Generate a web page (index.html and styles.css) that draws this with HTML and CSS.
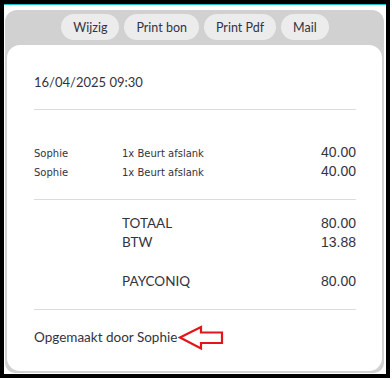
FILE: index.html
```html
<!DOCTYPE html>
<html>
<head>
<meta charset="utf-8">
<link rel="stylesheet" href="styles.css">
</head>
<body>
<div class="frame">
  <div class="panel">
    <div class="toolbar">
      <button class="pill">Wijzig</button>
      <button class="pill">Print bon</button>
      <button class="pill">Print Pdf</button>
      <button class="pill">Mail</button>
    </div>
    <div class="card">
      <div class="date">16/04/2025 09:30</div>
      <div class="rule rule-1"></div>
      <div class="lines">
        <div class="line"><span class="who">Sophie</span><span class="what">1x Beurt afslank</span><span class="amt">40.00</span></div>
        <div class="line"><span class="who">Sophie</span><span class="what">1x Beurt afslank</span><span class="amt">40.00</span></div>
      </div>
      <div class="rule rule-2"></div>
      <div class="totals">
        <div class="tot"><span class="lbl">TOTAAL</span><span class="amt">80.00</span></div>
        <div class="tot"><span class="lbl">BTW</span><span class="amt">13.88</span></div>
        <div class="tot pay"><span class="lbl">PAYCONIQ</span><span class="amt">80.00</span></div>
      </div>
      <div class="rule rule-3"></div>
      <div class="footer">
        <span class="made">Opgemaakt door Sophie</span>
        <svg class="arrow" width="46" height="26" viewBox="0 0 46 26">
          <polygon points="2,12.5 23,2 23,7.5 44,7.5 44,18 23,18 23,23.5" fill="none" stroke="#e3141b" stroke-width="2.2" stroke-linejoin="miter"/>
        </svg>
      </div>
    </div>
  </div>
</div>
</body>
</html>
```
FILE: styles.css
```css
html, body {
  margin: 0;
  padding: 0;
  background: #ffffff;
}
body {
  width: 392px;
  height: 380px;
  font-family: Lato, "Noto Sans", sans-serif;
  color: #333340;
}
.frame {
  box-sizing: border-box;
  width: 390px;
  height: 378px;
  border: 4px solid #000;
  background: #fff;
  display: flex;
  flex-direction: column;
  box-shadow: inset 0 1px 0 #17c3cc;
  padding: 6px 2px 0 1px;
}
.panel {
  flex: 1;
  background: #d1d1d1;
  border-radius: 12px 12px 10px 10px;
  padding: 4px 2px 2px 2px;
  display: flex;
  flex-direction: column;
  margin-bottom: 1px;
}
.toolbar {
  display: flex;
  justify-content: center;
  gap: 5px;
  height: 26px;
  margin-left: 1px;
}
.pill {
  font-family: Lato, "Noto Sans", sans-serif;
  font-size: 12.5px;
  color: #333340;
  background: #ececec;
  border: none;
  border-radius: 13px;
  height: 26px;
  padding: 0 12px;
  margin: 0;
}
.card {
  flex: 1;
  margin-top: 5px;
  background: #fff;
  border-radius: 13px;
  padding: 0 26px 0 27px;
  display: flex;
  flex-direction: column;
}
.date {
  margin-top: 27px;
  height: 20px;
  line-height: 20px;
  font-size: 13px;
}
.rule {
  height: 0;
  border-top: 1px solid #dcdcdc;
}
.rule-1 { margin-top: 17px; }
.rule-2 { margin-top: 18px; }
.rule-3 { margin-top: 18px; }
.lines { margin-top: 33px; }
.line {
  display: flex;
  align-items: baseline;
  height: 19px;
  line-height: 19px;
}
.who {
  width: 88px;
  font-family: "DejaVu Sans", Verdana, sans-serif;
  font-size: 10px;
}
.what {
  flex: 1;
  font-family: "DejaVu Sans", Verdana, sans-serif;
  font-size: 10px;
}
.amt {
  font-family: "Liberation Sans", Arial, sans-serif;
  font-size: 14px;
}
.totals { margin-top: 14px; }
.tot {
  display: flex;
  align-items: baseline;
  height: 19px;
  line-height: 19px;
  padding-left: 88px;
}
.tot .lbl {
  flex: 1;
  font-size: 13.5px;
}
.tot.pay { margin-top: 20px; }
.footer {
  margin-top: 14px;
  height: 26px;
  display: flex;
  align-items: center;
}
.made {
  font-size: 13.5px;
}
.arrow {
  margin-left: 1px;
  margin-top: 2px;
}
```
